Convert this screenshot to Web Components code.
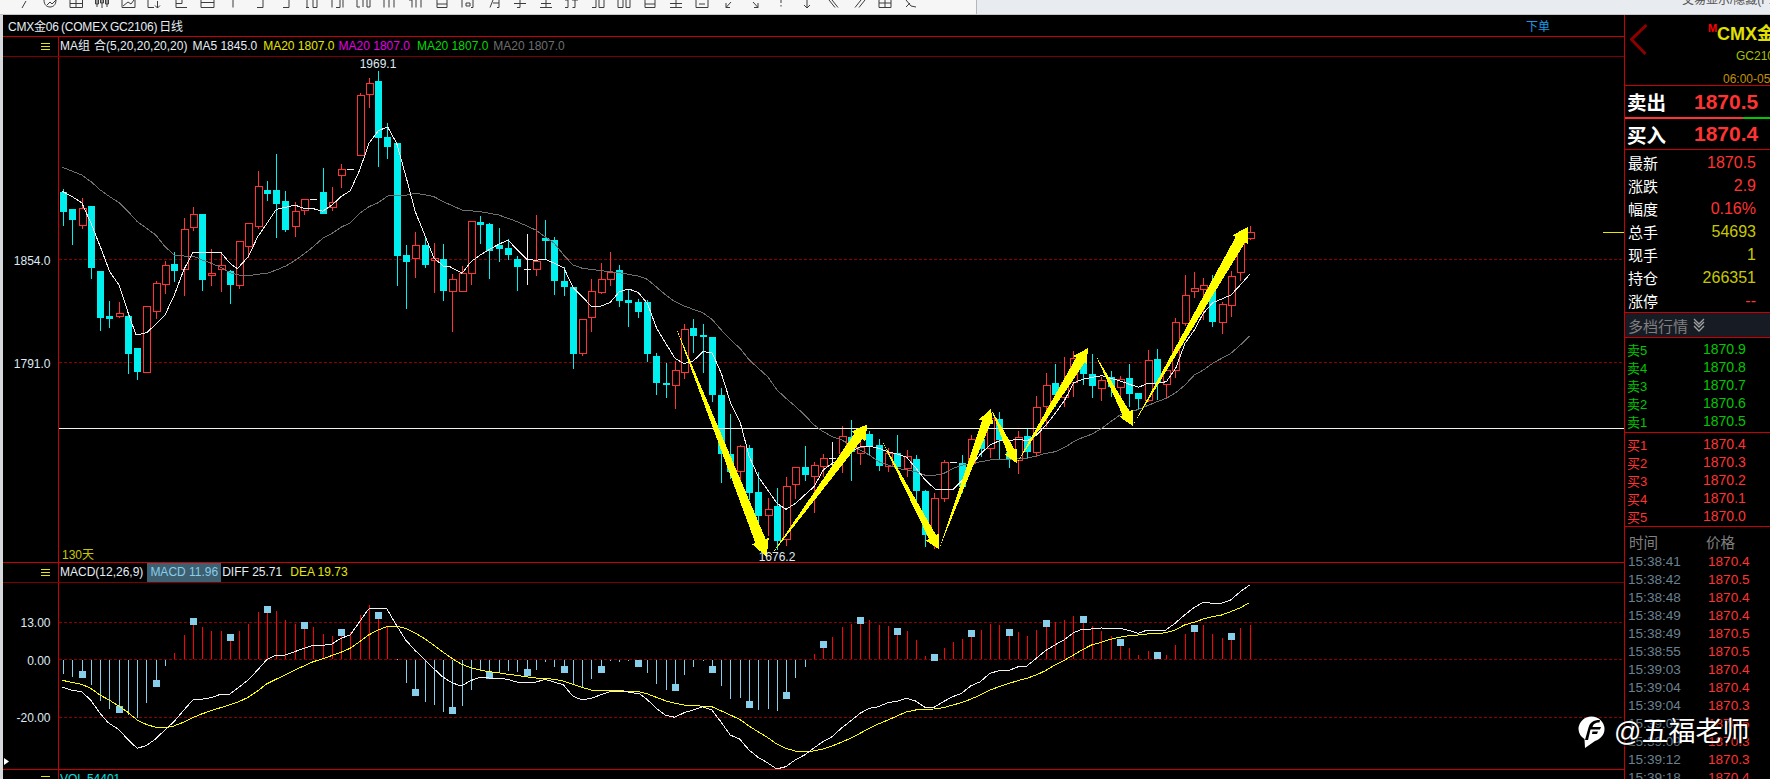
<!DOCTYPE html>
<html lang="zh">
<head>
<meta charset="utf-8">
<title>CMX金06 日线</title>
<style>
html,body{margin:0;padding:0;background:#000;width:1770px;height:779px;overflow:hidden}
body{font-family:"Liberation Sans","Noto Sans CJK SC",sans-serif;font-size:12px;color:#fff}
</style>
</head>
<body>
<qh-app></qh-app>
<script>
const FONT='"Liberation Sans","Noto Sans CJK SC",sans-serif';
const XAT=i=>Math.round(63+9.27*i);

/* ---------- data read off the reference ---------- */
const Z5=[['c',418,426,486,528],['c',477,477,510,585],['r',444,475,524,537],['c',468,468,654,687],['c',663,663,804,843],['c',753,798,807,835],['r',755,790,798,804],['c',785,798,912,972],['c',894,894,966,990],['r',767,769,965,968],['r',693,700,782,808],['r',633,646,701,732],['c',606,642,663,697],['r',504,538,656,738],['r',471,493,530,543],['c',492,492,690,723],['r',597,668,674,708],['r',610,644,656,726],['c',660,664,705,762],['r',574,574,704,717],['r',520,520,587,625],['r',363,409,527,537],['c',393,420,432,453],['c',312,420,462,564],['c',423,453,540,545],['r',456,484,527,561],['r',448,448,479,495],['w',448,448,448,448],['c',354,426,492,492],['r',411,457,471,483],['r',342,358,374,414],['w',357,357,357,357],['r',130,136,314,314],['r',84,100,131,174],['c',63,93,264,351],['c',219,261,291,327],['c',280,280,618,708],['c',585,615,636,777],['r',546,586,623,684],['c',558,585,645,654],['r',579,624,630,729],['c',582,627,723,753]];
const Z6=[['r',222,236,274,395],['r',198,220,274,275],['r',64,64,218,254],['c',48,66,75,132],['c',70,72,153,237],['c',84,135,147,186],['c',117,144,165,180],['c',168,177,201,273],['w',102,208,208,255],['r',45,183,206,228],['c',60,114,122,180],['c',111,120,243,285],['c',200,243,261,288],['c',261,261,462,507],['r',357,358,458,468],['r',238,274,352,396],['r',190,238,276,282],['r',156,215,236,258],['c',195,210,303,321],['c',268,300,309,381],['c',297,306,336,354],['c',300,306,462,486],['c',459,468,549,585],['c',489,549,555,594],['r',484,511,554,627],['r',372,388,515,537],['c',357,384,408,460],['c',372,405,411,519],['c',411,411,585,606],['c',565,585,762,849],['c',642,762,816,837],['r',735,739,814,860],['c',735,744,879,900],['c',816,876,948,990],['r',894,928,944,1008],['c',864,918,1023,1050],['r',830,859,1017,1038],['r',800,800,851,897],['c',738,801,825,843],['r',786,796,828,939],['r',762,775,797,830],['w',726,775,775,800],['r',678,709,760,820],['c',660,712,756,843],['r',720,740,758,795],['c',693,702,738,766],['c',718,735,798,813],['r',745,760,797,816],['c',705,760,800,815]];
const Z7=[['r',750,769,803,830],['c',765,777,873,905],['c',870,873,1005,1040],['r',880,895,1007,1048],['r',780,787,893,905],['w',787,787,787,787],['c',765,790,860,880],['r',705,718,790,800],['c',690,716,747,770],['r',655,655,745,775],['c',635,657,720,780],['c',720,755,778,805],['r',693,710,780,822],['c',685,708,755,778],['r',588,620,757,770],['r',520,556,617,680],['c',491,549,585,620],['r',470,547,590,622],['r',452,473,547,590],['c',470,490,522,556],['c',462,522,557,594],['r',530,539,563,603],['c',513,530,560,590],['r',528,536,560,590],['c',492,534,582,620],['c',578,580,596,630],['r',450,479,600,605],['c',447,477,550,600],['r',510,511,551,597],['r',355,367,509,533],['r',225,286,368,378],['r',215,265,272,294],['r',235,256,266,360],['c',225,270,366,381],['r',305,313,365,402],['r',213,229,314,351],['r',110,130,217,243],['r',78,97,113,120]];
const CANDLES=[...Z5.map(c=>[c[0],...c.slice(1).map(v=>v/3+50)]),...Z6.map(c=>[c[0],...c.slice(1).map(v=>v/3+200)]),...Z7.map(c=>[c[0],...c.slice(1).map(v=>v/3+200)])];

const pairs=(s,sx,ox,oy)=>s.trim().split(/\s+/).map(p=>{const [x,y]=p.split(',').map(Number);return (x/sx+ox).toFixed(1)+','+(y/3+oy).toFixed(1)});
const MA5=[...pairs('187,424 217,440 245,458 273,520 301,590 329,665 357,705 385,790 408,855 440,848 467,823 495,795 523,735 551,660 579,607 607,608 634,608 662,607 690,640 712,656 745,620 773,560 801,520 829,478 857,472 884,465 912,475 940,476 968,484 996,465 1023,440 1051,422 1079,360 1107,280 1135,242 1163,231 1190,280 1218,380 1246,485 1274,555 1302,625 1330,648',3,0,50),
...pairs('0,200 36,220 63,185 91,165 119,148 146,133 174,120 202,150 230,178 257,181 285,177 313,190 341,203 369,262 397,290 425,320 453,318 480,308 508,275 536,267 564,277 592,310 620,385 647,430 675,475 702,491 730,483 758,455 786,458 814,520 842,610 870,665 898,770 925,830 953,870 981,910 1008,928 1037,910 1064,885 1092,860 1120,810 1147,790 1175,775 1203,755 1231,740 1258,738 1286,745 1314,755 1342,762',3,450,200),
...pairs('20,772 48,805 76,840 105,867 132,868 160,868 188,840 216,795 243,760 271,735 298,722 326,722 354,718 382,722 410,705 438,675 466,640 494,600 521,548 549,538 577,532 605,527 632,535 660,543 688,553 716,562 743,550 771,550 799,545 827,505 855,430 883,390 910,340 938,308 965,297 993,285 1021,255 1049,223',3,900,200)].join(' ');
const MA20=[...pairs('187,352 245,375 273,395 301,420 329,440 357,458 385,485 412,515 440,535 467,555 495,590 523,615 551,618 579,618 607,630 634,640 662,652 690,668 717,675 745,677 773,673 801,670 829,660 857,648 884,632 912,612 940,590 968,565 996,550 1023,532 1051,518 1079,490 1107,470 1135,458 1163,438 1190,436 1218,436 1246,430 1274,434 1302,440 1330,455',3,0,50),
...pairs('0,14 36,30 91,35 146,45 202,65 257,90 285,110 313,130 341,165 369,195 397,205 453,212 508,218 564,228 592,238 620,262 647,285 675,305 702,318 758,338 786,358 814,390 842,420 870,445 898,480 925,505 953,530 981,570 1008,595 1037,620 1064,645 1092,675 1120,695 1147,710 1175,720 1203,735 1231,750 1258,765 1286,785 1314,795 1342,805',3,450,200),
...pairs('48,815 76,826 105,826 132,820 160,805 188,795 216,790 243,785 271,780 326,778 382,775 438,760 466,755 494,742 521,725 549,712 577,702 605,685 632,665 660,645 688,637 716,628 771,605 799,595 827,578 855,555 883,525 910,510 938,490 965,475 993,460 1021,435 1049,408',3,900,200)].join(' ');
const ARROWS=[[675,325,766.7,556.7,11,18,17],[770,556.7,867.3,424.3,10,17,15],[881,439,939,549.3,8,15,14],[939,549.3,991,409,9,15,14],[991,409,1016.7,463.3,8,14,13],[1016.7,463.3,1087.7,348.3,10,16,14],[1096,356,1132.7,425.7,8,15,14],[1132.7,425.7,1248,226.7,11,18,15]];

const MACD=[402,411,402,435,483,507,507,525,535,490,428,378,339,285,243,261,273,273,291,273,251,216,207,213,240,252,255,261,282,288,276,275,225,195,225,258,357,429,456,485,495,516,510,498,450,390,405,396,392,396,396,390,366,381,387,432,440,417,387,362,366,362,369,398,432,450,441,405,381,362,387,438,477,474,492,510,507,513,465,414,381,342,312,291,261,252,240,240,255,258,273,273,300,348,351,324,306,297,279,270,252,255,276,276,288,270,249,246,240,228,237,258,273,288,306,324,345,333,345,345,315,282,264,255,282,294,288,264,255];
const DIFF=[...pairs('152,441 175,450 200,455 222,480 245,520 265,548 290,568 313,598 336,625 358,617 381,597 404,570 426,545 449,512 472,480 494,478 517,473 540,463 562,463 585,442 608,420 631,390 653,360 676,345 699,345 722,335 744,325 767,316 790,316 812,313 835,295 858,285 881,245 903,207 926,205 948,207 971,255 994,300 1016,330 1039,358 1062,385 1084,410 1107,428 1130,438 1153,422 1175,412 1198,414 1221,415 1244,418 1266,426 1289,427 1312,427 1335,418 1357,426 1380,434 1403,468 1426,480 1448,475 1471,465 1494,455 1516,455 1539,456',2.45,0,540),
...pairs('0,462 17,478 40,505 62,525 85,532 108,518 130,510 153,500 176,510 198,545 221,585 244,597 267,630 289,652 312,668 335,687 357,680 380,660 403,645 425,625 448,605 471,590 493,565 516,543 539,520 562,505 584,500 607,488 630,484 652,475 675,483 698,502 720,502 743,485 766,470 788,460 811,437 834,425 857,400 880,392 902,392 925,381 948,378 971,355 993,332 1016,315 1038,300 1062,278 1083,268 1106,267 1130,264 1152,265 1175,265 1197,271 1221,280 1243,270 1265,272 1288,270 1311,250 1334,225 1357,203 1380,187 1402,190 1425,190 1447,180 1471,155 1493,135',2.45,640,540)].join(' ');
const DEA=[...pairs('152,421 200,433 222,445 245,465 267,480 290,497 313,517 336,540 358,553 381,562 404,563 426,558 449,547 472,533 494,522 517,512 540,503 562,495 585,485 608,472 631,453 653,432 676,418 699,405 722,390 744,378 767,365 790,357 812,347 835,337 858,325 881,305 903,285 926,270 948,260 971,259 994,265 1016,278 1039,295 1062,315 1084,335 1107,355 1130,372 1153,383 1175,390 1198,395 1221,398 1244,403 1266,406 1289,410 1312,414 1335,415 1357,418 1380,423 1403,433 1426,442 1448,450 1471,452 1494,452 1516,452 1539,454',2.45,0,540),
...pairs('0,456 17,461 40,472 62,482 85,490 108,495 130,496 153,499 176,500 198,512 221,525 244,538 267,558 289,575 312,592 335,612 357,625 380,633 403,635 425,633 448,627 471,618 493,607 516,595 539,580 562,565 584,552 607,540 630,528 652,516 675,510 698,508 720,507 743,503 766,495 788,488 811,477 834,465 857,450 880,440 902,431 925,422 948,415 971,405 993,392 1016,375 1038,362 1062,345 1083,330 1106,315 1130,307 1152,298 1175,292 1197,287 1221,285 1243,282 1265,281 1288,278 1311,270 1334,255 1357,247 1380,237 1402,230 1425,225 1447,215 1471,203 1493,188',2.45,640,540)].join(' ');

/* ---------- helpers ---------- */
function define(name,css,html){
  const cls=class extends HTMLElement{
    constructor(){super();const r=this.attachShadow({mode:'open'});r.innerHTML='<style>'+css+'</style>'+(typeof html==='function'?html(this):html);}
  };
  customElements.define(name,cls);
}
const burger='<svg width="9" height="7" viewBox="0 0 9 7"><path d="M0 .5H9M0 3.5H9M0 6.5H9" stroke="#e6e600" fill="none"/></svg>';

const TOOL=['M7 8L11 1','M3 0C3 5 6 7 9 7C12 7 15 5 15 0M6 5L9 2 11 4 15 0','M3 0V7.5H15.5V0M9 0V7.5M3 3.5H15.5','M4 0V7M9 0V8M14 0V7M2.5 0V4H5.5V0M7.5 0V3H10.5V0M12.5 0V4H15.5V0','M3 0V7.5H16V0M4 6L9 2 12 4 15 0','M3 0V7.5H9M12.5 1V8M10 5.5L12.5 8 15 5.5','M4 0V7.5H15M4 3.5H10V0','M3 0V7.5H16V0M3 2.5H16','M9 0V7.5','M13 0V7.5H7','M13 0V7.5H7','M5 0V7.5M4 7.5H7M11 0V7.5H15V0','M4 0V7.5M12 0V7.5H8M15 0V7.5','M3 0V7M9 0V7M3 7H6M13 7H16V0M13 0V7','M4 0V7.5M9 0V7.5M14 0V7.5','M3 0H6V7.5M10 0V7.5M15 0V7.5','M4 0V7.5H14V0M4 4H14','M3 0V7.5M14 0V7.5H12M7 3H11V6H7Z','M5 7.5L8 0M14 0V7.5H12M8 3H14','M9 0V7.5H6M3 3.5H15','M4 3.5H14M9 0V7.5M3 7.5H15','M2 0H5V7.5H2M9 0H15M12 0V7.5H9.5','M3 7.5H7V0M10 0V7.5H15V0','M3 0V7.5H8V0M11 0V7.5H15V0','M4 0V7.5H14V0M4 4H14','M9 0V7.5M3 3.5H15M3 7.5H15','M3 0V7.5H15V0M6 4H12','M6 7.5L11 2M6 3V7.5H10','M12 7.5L7 2M12 3V7.5H8','M9 0V3M9 5V6.5','M9 0V7.5M6 5L9 8 12 5','M5 0L11 7.5M8 0L14 7.5','M11 0L5 7.5M15 0L9 7.5','M3 0V7.5H15V0M9 0V7.5M3 3H15','M4 0L9 6 14 7M4 7L8 3'];
define('qh-toolbar',`
:host{display:flex;height:15px;overflow:hidden;background:#e8ebf0;box-sizing:border-box;border-bottom:1px solid #c4c6ca}
.left{width:977px;background:#f6f6f6;border-right:1px solid #b4b6ba;display:flex;padding-left:15px;gap:8.1px;box-sizing:border-box;flex:none}
svg{display:block;width:18px;height:8px;flex:none;overflow:hidden}
path{fill:none;stroke:#3c3c3c;stroke-width:1}
.note{margin-left:705px;white-space:nowrap;color:#555;font:12px/12px ${FONT};margin-top:-6px}
`,()=>`<div class="left">${TOOL.map(d=>`<svg viewBox="0 0 18 8"><path d="${d}"/></svg>`).join('')}</div><div class="note">交易显示/隐藏(F12)</div>`);

define('qh-title',`
:host{display:flex;justify-content:space-between;align-items:center;height:21px;border-bottom:1px solid #c80000;padding:0 74px 0 5px;font:12px ${FONT};color:#e6eef5}
.name{letter-spacing:-.2px;word-spacing:-1px}
.order{color:#1a9ae6}
`,'<span class="name">CMX金06 (COMEX GC2106) 日线</span><span class="order">下单</span>');

define('qh-pane-head',`
:host{display:grid;grid-template-columns:55px 1fr;height:19px;border-bottom:1px solid #7d0000;font:12px/19px ${FONT};white-space:nowrap}
.g{display:flex;align-items:center;justify-content:flex-end;padding-right:8px;box-sizing:border-box}
.t{border-left:1px solid #c80000;display:flex;gap:5px;padding-left:1px;overflow:hidden}
`,()=>`<div class="g">${burger}</div><div class="t"><slot></slot></div>`);

define('qh-ind',`:host{display:inline-block;color:var(--c,#e6eef5)}`,'<slot></slot>');

function poly(pts,c){return `<polyline points="${pts}" fill="none" stroke="${c}" stroke-width="1"/>`}
function hdash(y,x2=1624){return `<path d="M59 ${y}.5H${x2}" stroke="#8a0000" stroke-dasharray="3 2" fill="none" shape-rendering="crispEdges"/>`}
function label(x,y,t,anchor='end',c='#dfeaf4'){return `<text x="${x}" y="${y}" text-anchor="${anchor}" fill="${c}" font-size="12" font-family='${FONT.replace(/"/g,"")}'>${t}</text>`}
function arrow([x1,y1,x2,y2,w,h,l]){
  const d=Math.hypot(x2-x1,y2-y1),ux=(x2-x1)/d,uy=(y2-y1)/d,nx=-uy,ny=ux,bx=x2-ux*l,by=y2-uy*l;
  const p=[[x1,y1],[bx+nx*w/2,by+ny*w/2],[bx+nx*h/2,by+ny*h/2],[x2,y2],[bx-nx*h/2,by-ny*h/2],[bx-nx*w/2,by-ny*w/2]];
  return `<polygon points="${p.map(a=>a[0].toFixed(1)+','+a[1].toFixed(1)).join(' ')}" fill="#ffff00"/>`;
}
function candle(c,i){
  const [t,wt,bt,bb,wb]=c,x=XAT(i),xs=x+.5,col=t==='c'?'#00f0f0':t==='w'?'#f0f0f0':'#ff3333';
  const T=Math.round(wt),B=Math.round(wb),BT=Math.round(bt),BB=Math.round(bb);
  let s='';
  if(BT>T) s+=`<path d="M${xs} ${T}V${BT}" stroke="${col}"/>`;
  if(B>BB) s+=`<path d="M${xs} ${BB}V${B}" stroke="${col}"/>`;
  if(t==='c') s+=`<rect x="${x-3}" y="${BT}" width="7" height="${Math.max(BB-BT,1)}" fill="${col}"/>`;
  else if(t==='r') s+=`<rect x="${x-3+.5}" y="${BT+.5}" width="7" height="${Math.max(BB-BT,1)}" fill="#000" stroke="${col}"/>`;
  else s+=`<path d="M${x-3} ${BT+.5}H${x+4}" stroke="${col}"/>`;
  return s;
}

define('qh-kline',`:host{display:block;height:505px;border-bottom:1px solid #c80000}svg{display:block;width:1621px;height:505px}`,()=>`
<svg viewBox="3 57 1621 505">
<path d="M58.5 57V562" stroke="#c80000" shape-rendering="crispEdges"/>
${hdash(259)}${hdash(362)}
<g shape-rendering="crispEdges">${CANDLES.map(candle).join('')}
<path d="M59 428.5H1624" stroke="#f2f2e6"/>
<path d="M1603 232.5H1624" stroke="#e6e600"/></g>
<g shape-rendering="crispEdges">${poly(MA20,'#707070')}${poly(MA5,'#f0f0f0')}</g>
<g shape-rendering="crispEdges">${ARROWS.map(arrow).join('')}</g>
${label(50.5,264.5,'1854.0')}${label(50.5,367.5,'1791.0')}
${label(378,67.5,'1969.1','middle')}${label(777,561,'1676.2','middle')}
${label(62,559,'130天','start','#c8c800')}
</svg>`);

define('qh-macd',`:host{display:block;height:186px;border-bottom:1px solid #c80000}svg{display:block;width:1621px;height:186px}`,()=>{
  const base=659;let bars='',sq='';
  MACD.forEach((z,i)=>{const x=XAT(i),y=Math.round(z/3+540);const pos=y<base;
    bars+=`<path d="M${x+.5} ${pos?y:base+1}V${pos?base:y}" stroke="${pos?'#ff0000':'#87ceeb'}"/>`;
    if(i%4===2) sq+=`<rect x="${x-3}" y="${y-3}" width="7" height="7" fill="#87ceeb"/>`;});
  return `<svg viewBox="3 583 1621 186">
<path d="M58.5 583V769" stroke="#c80000" shape-rendering="crispEdges"/>
${hdash(622)}${hdash(659)}${hdash(717)}
<g shape-rendering="crispEdges">${bars}${sq}${poly(DEA,'#ffff00')}${poly(DIFF,'#f0f0f0')}</g>
${label(50.5,626.5,'13.00')}${label(50.5,665,'0.00')}${label(50.5,722,'-20.00')}
<polygon points="4,758 9,761.5 4,765" fill="#fff"/>
</svg>`});

define('qh-row',`
:host{display:flex;justify-content:space-between;align-items:center;height:23px;padding:0 14px 0 3px;font:16px ${FONT};white-space:nowrap}
.k{font-size:15px;color:#fff}.v{color:var(--v,#ff3333)}
`,el=>`<span class="k">${el.getAttribute('k')}</span><span class="v"><slot></slot></span>`);

define('qh-big',`
:host{display:flex;align-items:center;height:var(--h,30px);padding-left:2px;font:bold 21px ${FONT};white-space:nowrap}
.k{color:#fff;font-size:19.5px;width:67px;flex:none}.v{color:#ff3333}
`,el=>`<span class="k">${el.getAttribute('k')}</span><span class="v"><slot></slot></span>`);

define('qh-level',`
:host{display:flex;align-items:center;height:18px;padding-left:2px;font:14px ${FONT};color:var(--c,#00c800);white-space:nowrap}
.k{font-size:13px;width:76px;flex:none}
`,el=>`<span class="k">${el.getAttribute('k')}</span><span><slot></slot></span>`);

define('qh-tick',`
:host{display:flex;align-items:center;height:18px;padding-left:3px;font:13.6px ${FONT};white-space:nowrap}
.k{color:#6a8090;width:80px;flex:none}.v{color:#ff3333}
`,el=>`<span class="k">${el.getAttribute('k')}</span><span class="v"><slot></slot></span>`);

const line='border-bottom:1px solid #c80000';
define('qh-side',`
:host{display:block;width:145px;height:764px;overflow:hidden;border-left:1px solid #c80000;font-family:${FONT}}
.head{display:flex;height:70px;${line};overflow:hidden}
.back{flex:none;margin:9px 0 0 5px;display:block}
.hc{white-space:nowrap;display:flex;flex-direction:column;margin-left:-16px}
.name{margin:8px 0 0 85px;font:bold 18px/22px ${FONT};color:#e0e000;position:relative}
.name sup{position:absolute;left:-9px;top:-1px;font:bold 11px/12px ${FONT};color:#ff0000}
.code{margin:3px 0 0 104px;font:12px/16px ${FONT};color:#a8c000}
.time{margin:7px 0 0 91px;font:12px/16px ${FONT};color:#c09000}
.bar{height:2px;background:linear-gradient(90deg,#ff3333 0 118px,#00c800 118px)}
.bb{${line}}
.info{padding-top:1px;${line}}
.band{height:24px;background:#171b24;${line};display:flex;align-items:center;gap:5px;padding-left:3px;color:#808080;font-size:15px}
.sell{padding-top:2px;height:92px;${line}}
.buy{padding-top:2px;height:91px;${line}}
.th{display:flex;height:25px;align-items:flex-end;color:#808080;font-size:14.5px;padding:0 0 0 4px;box-sizing:border-box}
.th span:first-child{width:77px}
`,()=>`
<div class="head">
<svg class="back" width="18" height="32" viewBox="0 0 18 32"><path d="M16.5 1L1.5 15.5 15.5 30" fill="none" stroke="#8c0000" stroke-width="3"/></svg>
<div class="hc"><div class="name"><sup>M</sup>CMX金06</div><div class="code">GC2106</div><div class="time">06:00-05:00</div></div>
</div>
<qh-big k="卖出" style="--h:31px">1870.5</qh-big>
<div class="bar"></div>
<qh-big k="买入" class="bb">1870.4</qh-big>
<div class="info">
<qh-row k="最新">1870.5</qh-row><qh-row k="涨跌">2.9</qh-row><qh-row k="幅度">0.16%</qh-row>
<qh-row k="总手" style="--v:#c8c800">54693</qh-row><qh-row k="现手" style="--v:#c8c800">1</qh-row>
<qh-row k="持仓" style="--v:#c8c800">266351</qh-row><qh-row k="涨停">--</qh-row>
</div>
<div class="band"><span>多档行情</span><svg width="12" height="14" viewBox="0 0 12 14"><path d="M1 1L6 6 11 1M1 4L6 9 11 4M1 8L6 13 11 8" fill="none" stroke="#a0a0a0" stroke-width="1.3"/></svg></div>
<div class="sell">
<qh-level k="卖5">1870.9</qh-level><qh-level k="卖4">1870.8</qh-level><qh-level k="卖3">1870.7</qh-level><qh-level k="卖2">1870.6</qh-level><qh-level k="卖1">1870.5</qh-level>
</div>
<div class="buy" style="--c:#ff3333">
<qh-level k="买1">1870.4</qh-level><qh-level k="买2">1870.3</qh-level><qh-level k="买3">1870.2</qh-level><qh-level k="买4">1870.1</qh-level><qh-level k="买5">1870.0</qh-level>
</div>
<div class="th"><span>时间</span><span>价格</span></div>
${[['15:38:41','1870.4'],['15:38:42','1870.5'],['15:38:48','1870.4'],['15:38:49','1870.4'],['15:38:49','1870.5'],['15:38:55','1870.5'],['15:39:03','1870.4'],['15:39:04','1870.4'],['15:39:04','1870.3'],['15:39:05','1870.5'],['15:39:09','1870.3'],['15:39:12','1870.3'],['15:39:18','1870.4']].map(r=>`<qh-tick k="${r[0]}">${r[1]}</qh-tick>`).join('')}
`);

define('qh-watermark',`
:host{position:absolute;left:1578px;top:715px;display:flex;align-items:center;gap:9px;color:#fff;font:27px/34px ${FONT};white-space:nowrap;text-shadow:0 0 3px rgba(0,0,0,.9),1px 1px 2px rgba(0,0,0,.8)}
svg{display:block;flex:none}
`,`<svg width="27" height="32" viewBox="0 0 27 32"><path d="M13.5 0.5A13 12.5 0 0 1 26.5 13C26.5 19 22 23 17 25L7 32 6.5 23A13 12.5 0 0 1 .5 13 13 12.5 0 0 1 13.5 .5Z" fill="#fff"/><path d="M7 24L10.5 11.5C12 6.5 15 4 22 4L21.5 6.5C17 6.5 15.5 8 14.5 11H23L22 13.5H12.5L10 24Z" fill="#000"/><path d="M14.5 15.5H20L19 18H14Z" fill="#000"/></svg><span>@五福老师</span>`);

define('qh-app',`
:host{display:block;position:relative;width:1770px;height:779px;background:#000;overflow:hidden}
.main{display:flex;height:764px;border-left:3px solid #d6d8dc;box-sizing:border-box}
.chart{width:1621px;flex:none;overflow:hidden}
`,`
<qh-toolbar></qh-toolbar>
<div class="main">
<div class="chart">
<qh-title></qh-title>
<qh-pane-head><qh-ind>MA<span style="letter-spacing:4px">组</span>合(5,20,20,20,20)</qh-ind><qh-ind>MA5 1845.0</qh-ind><qh-ind style="--c:#e6e600;margin-left:1px">MA20 1807.0</qh-ind><qh-ind style="--c:#e600e6;margin-left:-1px">MA20 1807.0</qh-ind><qh-ind style="--c:#00dc00;margin-left:2px">MA20 1807.0</qh-ind><qh-ind style="--c:#6e6e6e">MA20 1807.0</qh-ind></qh-pane-head>
<qh-kline></qh-kline>
<qh-pane-head><qh-ind>MACD(12,26,9)</qh-ind><qh-ind style="background:#3e5f70;--c:#87ceeb;padding:0 3px;margin-left:-1px">MACD 11.96</qh-ind><qh-ind style="margin-left:-4px">DIFF 25.71</qh-ind><qh-ind style="--c:#e6e600;margin-left:3px">DEA 19.73</qh-ind></qh-pane-head>
<qh-macd></qh-macd>
<qh-pane-head><qh-ind style="--c:#00e0e0">VOL 54401</qh-ind></qh-pane-head>
</div>
<qh-side></qh-side>
</div>
<qh-watermark></qh-watermark>
`);
</script>
</body>
</html>
